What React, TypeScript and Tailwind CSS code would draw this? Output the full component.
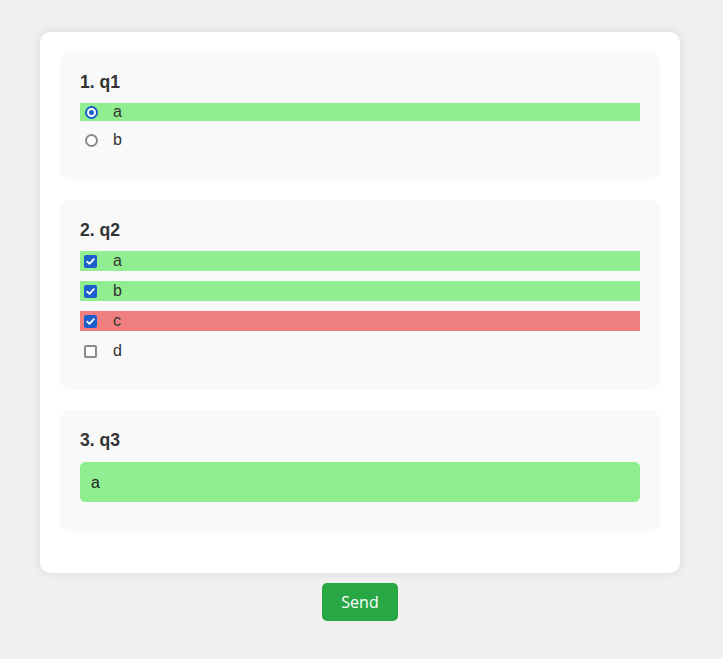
import React from "react";

const font = { fontFamily: '"Liberation Sans", Arial, sans-serif' };

function Radio({ checked }: { checked?: boolean }) {
  return checked ? (
    <span className="ml-[5px] w-[13px] h-[13px] rounded-full border-[2px] border-[#1a5fcc] bg-white flex items-center justify-center shrink-0">
      <span className="w-[5px] h-[5px] rounded-full bg-[#1a5fcc]" />
    </span>
  ) : (
    <span className="ml-[5px] w-[13px] h-[13px] rounded-full border-[2px] border-[#8a8a8a] bg-white shrink-0" />
  );
}

function Check({ checked }: { checked?: boolean }) {
  return checked ? (
    <span className="ml-[4px] w-[13px] h-[13px] rounded-[2px] bg-[#1a5fcc] flex items-center justify-center shrink-0">
      <svg width="9" height="9" viewBox="0 0 9 9" fill="none">
        <path d="M1.2 4.6 L3.5 6.8 L7.8 2.2" stroke="white" strokeWidth="1.8" strokeLinecap="round" strokeLinejoin="round" />
      </svg>
    </span>
  ) : (
    <span className="ml-[4px] w-[13px] h-[13px] rounded-[2px] border-[2px] border-[#8a8a8a] bg-white shrink-0" />
  );
}

function RadioRow({ label, checked, bg }: { label: string; checked?: boolean; bg?: string }) {
  return (
    <label className={`flex items-center h-[18px] ${bg ?? ""}`}>
      <Radio checked={checked} />
      <span className="ml-[15px] text-[16px] leading-[18px] text-[#333]">{label}</span>
    </label>
  );
}

function CheckRow({ label, checked, bg }: { label: string; checked?: boolean; bg?: string }) {
  return (
    <label className={`flex items-center h-[20px] ${bg ?? ""}`}>
      <Check checked={checked} />
      <span className="ml-[16px] text-[16px] leading-[18px] text-[#333]">{label}</span>
    </label>
  );
}

export default function App() {
  return (
    <div className="min-h-[659px] bg-[#f0f0f0] pt-[32px]" style={font}>
      <div className="ml-[40px] w-[640px]">
        <div className="bg-white rounded-[10px] shadow-[0_0_10px_rgba(0,0,0,0.1)] px-[20px] pt-[20px] pb-[41px] flex flex-col gap-[20px]">
          <div className="bg-[#f9f9f9] rounded-[10px] px-[20px] pt-[20px] pb-[31px]">
            <div className="font-bold text-[17.6px] leading-[21px] h-[21px] mb-[10px] text-[#333]">1. q1</div>
            <div className="flex flex-col gap-[10px]">
              <RadioRow label="a" checked bg="bg-[#90ee90]" />
              <RadioRow label="b" />
            </div>
          </div>
          <div className="bg-[#f9f9f9] rounded-[10px] px-[20px] pt-[20px] pb-[29px]">
            <div className="font-bold text-[17.6px] leading-[21px] h-[21px] mb-[10px] text-[#333]">2. q2</div>
            <div className="flex flex-col gap-[10px]">
              <CheckRow label="a" checked bg="bg-[#90ee90]" />
              <CheckRow label="b" checked bg="bg-[#90ee90]" />
              <CheckRow label="c" checked bg="bg-[#f08080]" />
              <CheckRow label="d" />
            </div>
          </div>
          <div className="bg-[#f9f9f9] rounded-[10px] px-[20px] pt-[20px] pb-[30px]">
            <div className="font-bold text-[17.6px] leading-[21px] h-[21px] mb-[11px] text-[#333]">3. q3</div>
            <input
              type="text"
              defaultValue="a"
              readOnly
              className="block w-full h-[40px] px-[10px] pt-[2px] rounded-[5px] border border-[#90ee90] bg-[#90ee90] text-[16px] text-[#222] outline-none"
              style={font}
            />
          </div>
        </div>
        <div className="flex justify-center mt-[10px]">
          <button
            className="w-[76px] h-[38px] rounded-[5px] bg-[#28a745] text-white text-[16px]"
            style={{ fontFamily: '"Open Sans", "Noto Sans", sans-serif' }}
          >
            Send
          </button>
        </div>
      </div>
    </div>
  );
}
